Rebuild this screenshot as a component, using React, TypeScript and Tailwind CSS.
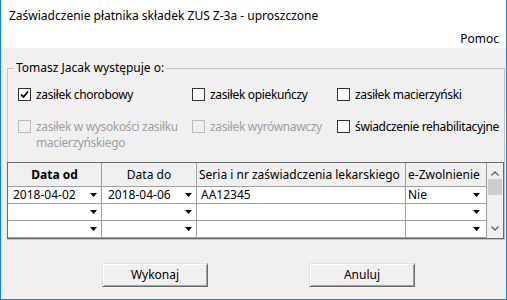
import React from "react";

const font = "font-['Noto_Sans','Liberation_Sans',sans-serif]";

function Check(props: { checked?: boolean; disabled?: boolean }) {
  const { checked, disabled } = props;
  return (
    <span
      className={
        "flex h-[13px] w-[13px] shrink-0 items-center justify-center border " +
        (disabled ? "border-[#bcbcbc] bg-[#f0f0f0]" : "border-[#333333] bg-white")
      }
    >
      {checked && (
        <svg width="9" height="9" viewBox="0 0 9 9">
          <path d="M1 4.5 L3.5 7 L8 1.5" fill="none" stroke="#000" strokeWidth="1.8" />
        </svg>
      )}
    </span>
  );
}

function Option(props: { label: React.ReactNode; checked?: boolean; disabled?: boolean }) {
  return (
    <div className="flex items-start gap-[5px]">
      <div className="pt-[1px]">
        <Check checked={props.checked} disabled={props.disabled} />
      </div>
      <span
        className={
          "whitespace-nowrap leading-[16px] tracking-[-0.35px] " +
          (props.disabled ? "text-[#a0a0a0]" : "text-black")
        }
      >
        {props.label}
      </span>
    </div>
  );
}

function DropArrow() {
  return (
    <svg width="7" height="4" viewBox="0 0 7 4" className="shrink-0">
      <polygon points="0,0 7,0 3.5,4" fill="#000" />
    </svg>
  );
}

function Cell(props: { text?: string; arrow?: boolean; pl: string; pr: string }) {
  return (
    <div
      className={
        "flex h-[17px] items-center justify-between border-r border-b border-[#a0a0a0] bg-white " +
        props.pl +
        " " +
        props.pr
      }
    >
      <span className="leading-[16px]">{props.text ?? ""}</span>
      {props.arrow && <DropArrow />}
    </div>
  );
}

const rows = [
  { od: "2018-04-02", doo: "2018-04-06", seria: "AA12345", ez: "Nie" },
  { od: "", doo: "", seria: "", ez: "" },
  { od: "", doo: "", seria: "", ez: "" },
];

const btn =
  "h-[24px] w-[106px] border border-b-[#6b6b6b] border-l-[#e3e3e3] border-r-[#6b6b6b] border-t-[#e3e3e3] bg-[#f0f0f0] shadow-[inset_1px_1px_0_#ffffff,inset_-1px_-1px_0_#a0a0a0]";

export default function App() {
  return (
    <div className={"flex h-[300px] w-[507px] flex-col border-x border-b border-[#1883d7] bg-[#f0f0f0] text-[12px] text-black " + font}>
      <div className="flex h-[48px] flex-col bg-white">
        <div className="h-[31px] pl-[8px] pt-[7px] leading-[18px]">
          Zaświadczenie płatnika składek ZUS Z-3a - uproszczone
        </div>
        <div className="flex justify-end pr-[7px] leading-[16px]">Pomoc</div>
      </div>

      <fieldset className="mx-[6px] mt-[12px] h-[180px] border border-[#c4c4c4]">
        <legend className="ml-[6px] px-[2px] leading-[16px]">Tomasz Jacak występuje o:</legend>

        <div className="grid grid-cols-[174px_145px_1fr] gap-y-[16px] pl-[10px] pt-[11px]">
          <Option label="zasiłek chorobowy" checked />
          <Option label="zasiłek opiekuńczy" />
          <Option label="zasiłek macierzyński" />
          <Option
            disabled
            label={
              <>
                zasiłek w wysokości zasiłku
                <br />
                macierzyńskiego
              </>
            }
          />
          <Option disabled label="zasiłek wyrównawczy" />
          <Option label="świadczenie rehabilitacyjne" />
        </div>

        <div className="-ml-px mt-[11px] flex border border-[#6b6b6b] bg-[#f0f0f0]">
          <div className="grid grid-cols-[94px_95px_209px_81px]">
            <div className="flex h-[24px] items-center justify-center border-r border-b border-[#a0a0a0] font-bold">
              Data od
            </div>
            <div className="flex h-[24px] items-center justify-center border-r border-b border-[#a0a0a0]">
              Data do
            </div>
            <div className="flex h-[24px] items-center border-r border-b border-[#a0a0a0] pl-[2px]">
              Seria i nr zaświadczenia lekarskiego
            </div>
            <div className="flex h-[24px] items-center border-r border-b border-[#a0a0a0] pl-[2px]">
              e-Zwolnienie
            </div>
            {rows.map((r, i) => (
              <React.Fragment key={i}>
                <Cell text={r.od} arrow pl="pl-[5px]" pr="pr-[4px]" />
                <Cell text={r.doo} arrow pl="pl-[6px]" pr="pr-[4px]" />
                <Cell text={r.seria} pl="pl-[4px]" pr="pr-[4px]" />
                <Cell text={r.ez} arrow pl="pl-[2px]" pr="pr-[6px]" />
              </React.Fragment>
            ))}
          </div>
          <div className="flex w-[16px] flex-col items-center">
            <div className="flex h-[16px] w-full items-center justify-center pt-[4px]">
              <svg width="8" height="5" viewBox="0 0 8 5">
                <polyline points="0.5,4.5 4,1 7.5,4.5" fill="none" stroke="#606060" strokeWidth="1.3" />
              </svg>
            </div>
            <div className="h-[16px] w-[14px] bg-[#cdcdcd]" />
            <div className="flex-1" />
            <div className="flex h-[16px] w-full items-center justify-center pb-[3px]">
              <svg width="8" height="5" viewBox="0 0 8 5">
                <polyline points="0.5,0.5 4,4 7.5,0.5" fill="none" stroke="#606060" strokeWidth="1.3" />
              </svg>
            </div>
          </div>
        </div>
      </fieldset>

      <div className="mt-[23px] flex gap-[101px] pl-[101px]">
        <button className={btn}>Wykonaj</button>
        <button className={btn}>Anuluj</button>
      </div>
    </div>
  );
}
